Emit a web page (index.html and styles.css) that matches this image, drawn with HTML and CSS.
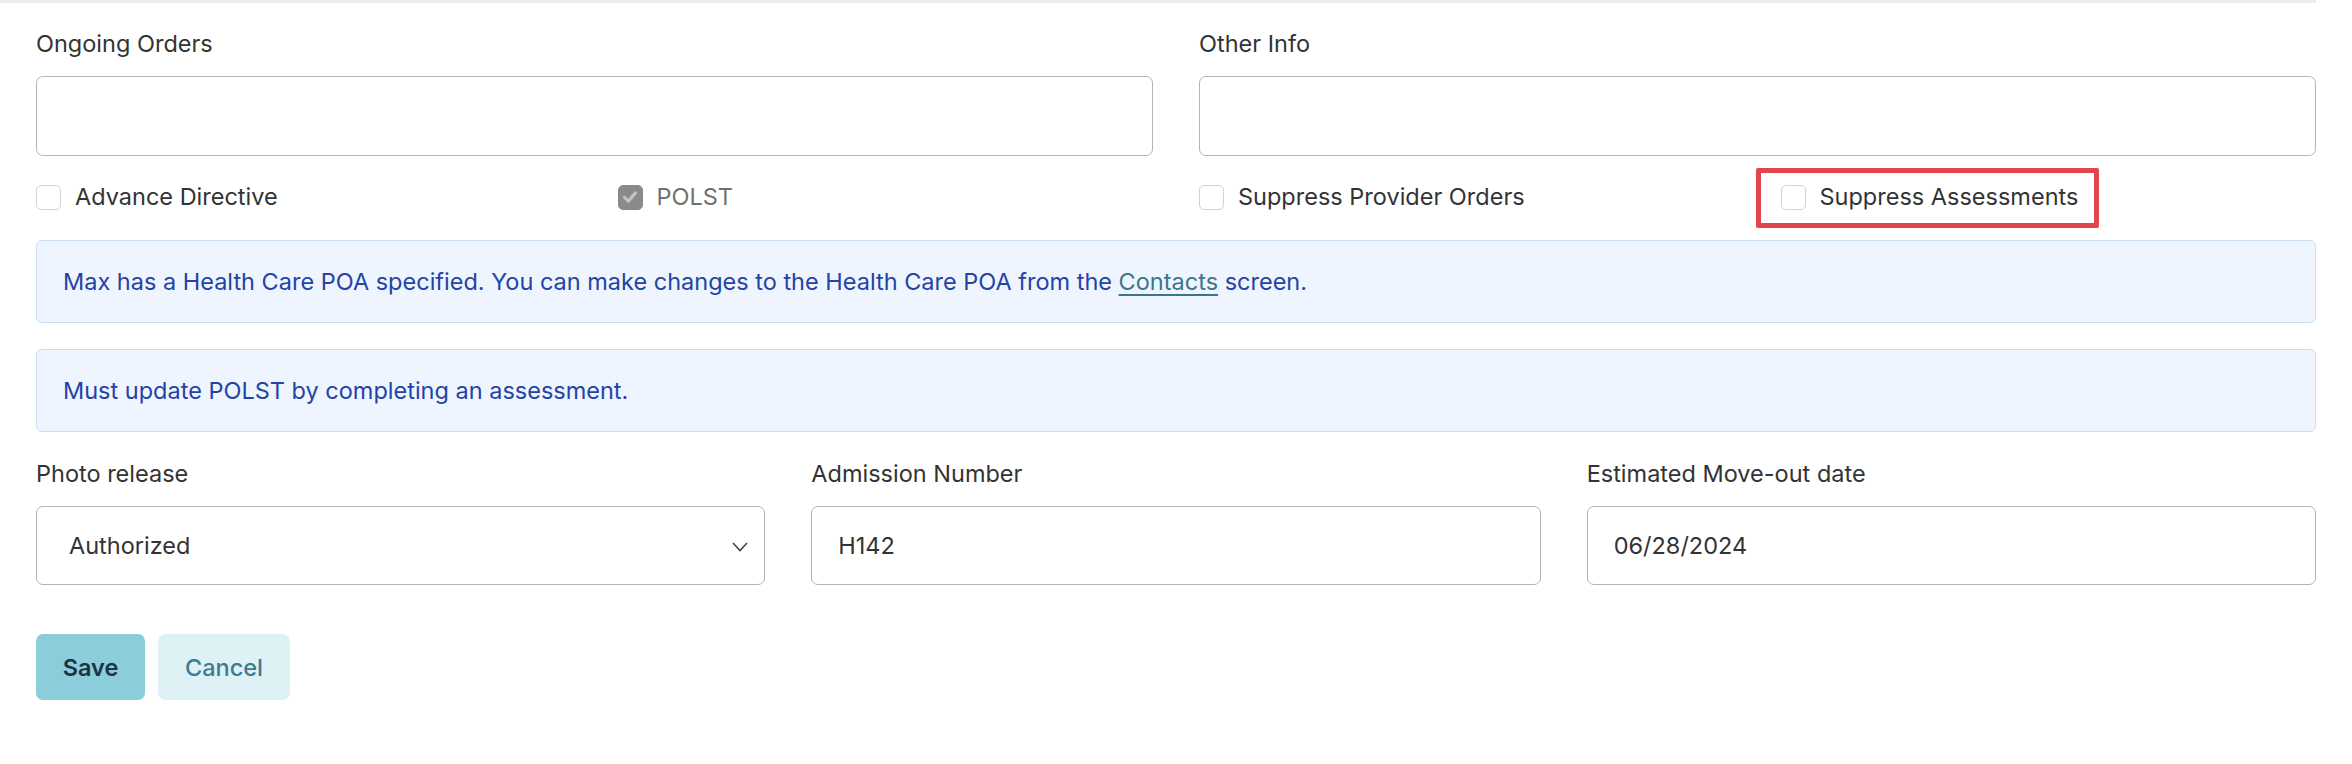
FILE: index.html
```html
<!DOCTYPE html>
<html>
<head>
<meta charset="utf-8">
<link rel="stylesheet" href="styles.css">
</head>
<body>
<div class="topline"></div>
<div class="page">
  <div class="grid2">
    <div class="field">
      <label class="lbl">Ongoing Orders</label>
      <div class="textarea"></div>
    </div>
    <div class="field">
      <label class="lbl">Other Info</label>
      <div class="textarea"></div>
    </div>
  </div>

  <div class="checks">
    <div class="check"><span class="box"></span><span>Advance Directive</span></div>
    <div class="check disabled"><span class="box checked"><svg viewBox="0 0 24 24" width="24" height="24"><path d="M6 12.5 L10.2 16.5 L18 7.5" fill="none" stroke="#c4c4c4" stroke-width="3.4" stroke-linecap="round" stroke-linejoin="round"/></svg></span><span>POLST</span></div>
    <div class="check"><span class="box"></span><span>Suppress Provider Orders</span></div>
    <div class="check highlight"><span class="box"></span><span>Suppress Assessments</span><span class="redbox"></span></div>
  </div>

  <div class="alert">Max has a Health Care POA specified. You can make changes to the Health Care POA from the&nbsp;<a class="link">Contacts</a>&nbsp;screen.</div>
  <div class="alert">Must update POLST by completing an assessment.</div>

  <div class="grid3">
    <div class="field">
      <label class="lbl">Photo release</label>
      <div class="input select"><span>Authorized</span><svg class="chev" viewBox="0 0 16 10" width="16" height="10"><path d="M1 1 L8 8.5 L15 1" fill="none" stroke="#444" stroke-width="1.6"/></svg></div>
    </div>
    <div class="field">
      <label class="lbl">Admission Number</label>
      <div class="input">H142</div>
    </div>
    <div class="field">
      <label class="lbl">Estimated Move-out date</label>
      <div class="input">06/28/2024</div>
    </div>
  </div>

  <div class="buttons">
    <button class="btn save">Save</button>
    <button class="btn cancel">Cancel</button>
  </div>
</div>
</body>
</html>
```

FILE: styles.css
```css
html, body {
  margin: 0;
  padding: 0;
  background: #ffffff;
}
body {
  font-family: Inter, "Noto Sans", "Liberation Sans", sans-serif;
  font-size: 23.5px;
  line-height: 36px;
  color: #333333;
}
.topline {
  width: 2316px;
  height: 3px;
  background: #ececec;
}
.page {
  width: 2280px;
  padding: 0 36px;
}
.grid2 {
  display: grid;
  grid-template-columns: 1fr 1fr;
  column-gap: 46px;
  margin-top: 23px;
}
.grid3 {
  display: grid;
  grid-template-columns: 1fr 1fr 1fr;
  column-gap: 46px;
  margin-top: 24px;
}
.field {
  display: flex;
  flex-direction: column;
}
.lbl {
  display: block;
  margin-bottom: 14px;
  color: #333333;
}
.textarea {
  height: 78px;
  border: 1.5px solid #b5b5b5;
  border-radius: 7px;
}
.checks {
  display: grid;
  grid-template-columns: repeat(4, 1fr);
  column-gap: 46px;
  margin-top: 23px;
}
.check {
  display: flex;
  align-items: center;
  gap: 14px;
  position: relative;
  color: #333333;
}
.box {
  width: 25px;
  height: 25px;
  box-sizing: border-box;
  border: 1.5px solid #d2d2d2;
  border-radius: 5px;
  background: #fff;
  flex: none;
}
.box.checked {
  background: #8a8a8a;
  border-color: #8a8a8a;
  display: flex;
  align-items: center;
  justify-content: center;
}
.box.checked svg {
  width: 22px;
  height: 22px;
}
.check.disabled {
  color: #707070;
}
.redbox {
  position: absolute;
  left: -25px;
  top: -11px;
  width: 343px;
  height: 60px;
  box-sizing: border-box;
  border: 5px solid #e0464b;
  border-radius: 2px;
}
.alert {
  margin-top: 25px;
  height: 83px;
  box-sizing: border-box;
  border: 1.5px solid #c9def2;
  border-radius: 6px;
  background: #eef5fe;
  color: #2443a6;
  padding: 0 26px;
  display: flex;
  align-items: center;
}
.alert + .alert {
  margin-top: 26px;
}
.link {
  color: #3b7689;
  text-decoration: underline;
  text-decoration-thickness: 2px;
  text-underline-offset: 4px;
}
.input {
  height: 79px;
  box-sizing: border-box;
  border: 1.5px solid #b5b5b5;
  border-radius: 7px;
  padding: 0 26px;
  display: flex;
  align-items: center;
  color: #333333;
}
.input.select {
  padding: 0 16px 0 32px;
  justify-content: space-between;
}
.chev {
  margin-top: 2px;
}
.buttons {
  display: flex;
  gap: 13px;
  margin-top: 49px;
}
.btn {
  font-family: Inter, "Noto Sans", "Liberation Sans", sans-serif;
  font-size: 23.5px;
  height: 66px;
  border: none;
  border-radius: 7px;
  cursor: pointer;
}
.save {
  width: 109px;
  background: #8bcddb;
  color: #1b3342;
  font-weight: 600;
}
.cancel {
  width: 132px;
  background: #def2f5;
  color: #3d7a93;
  font-weight: 500;
}
```
